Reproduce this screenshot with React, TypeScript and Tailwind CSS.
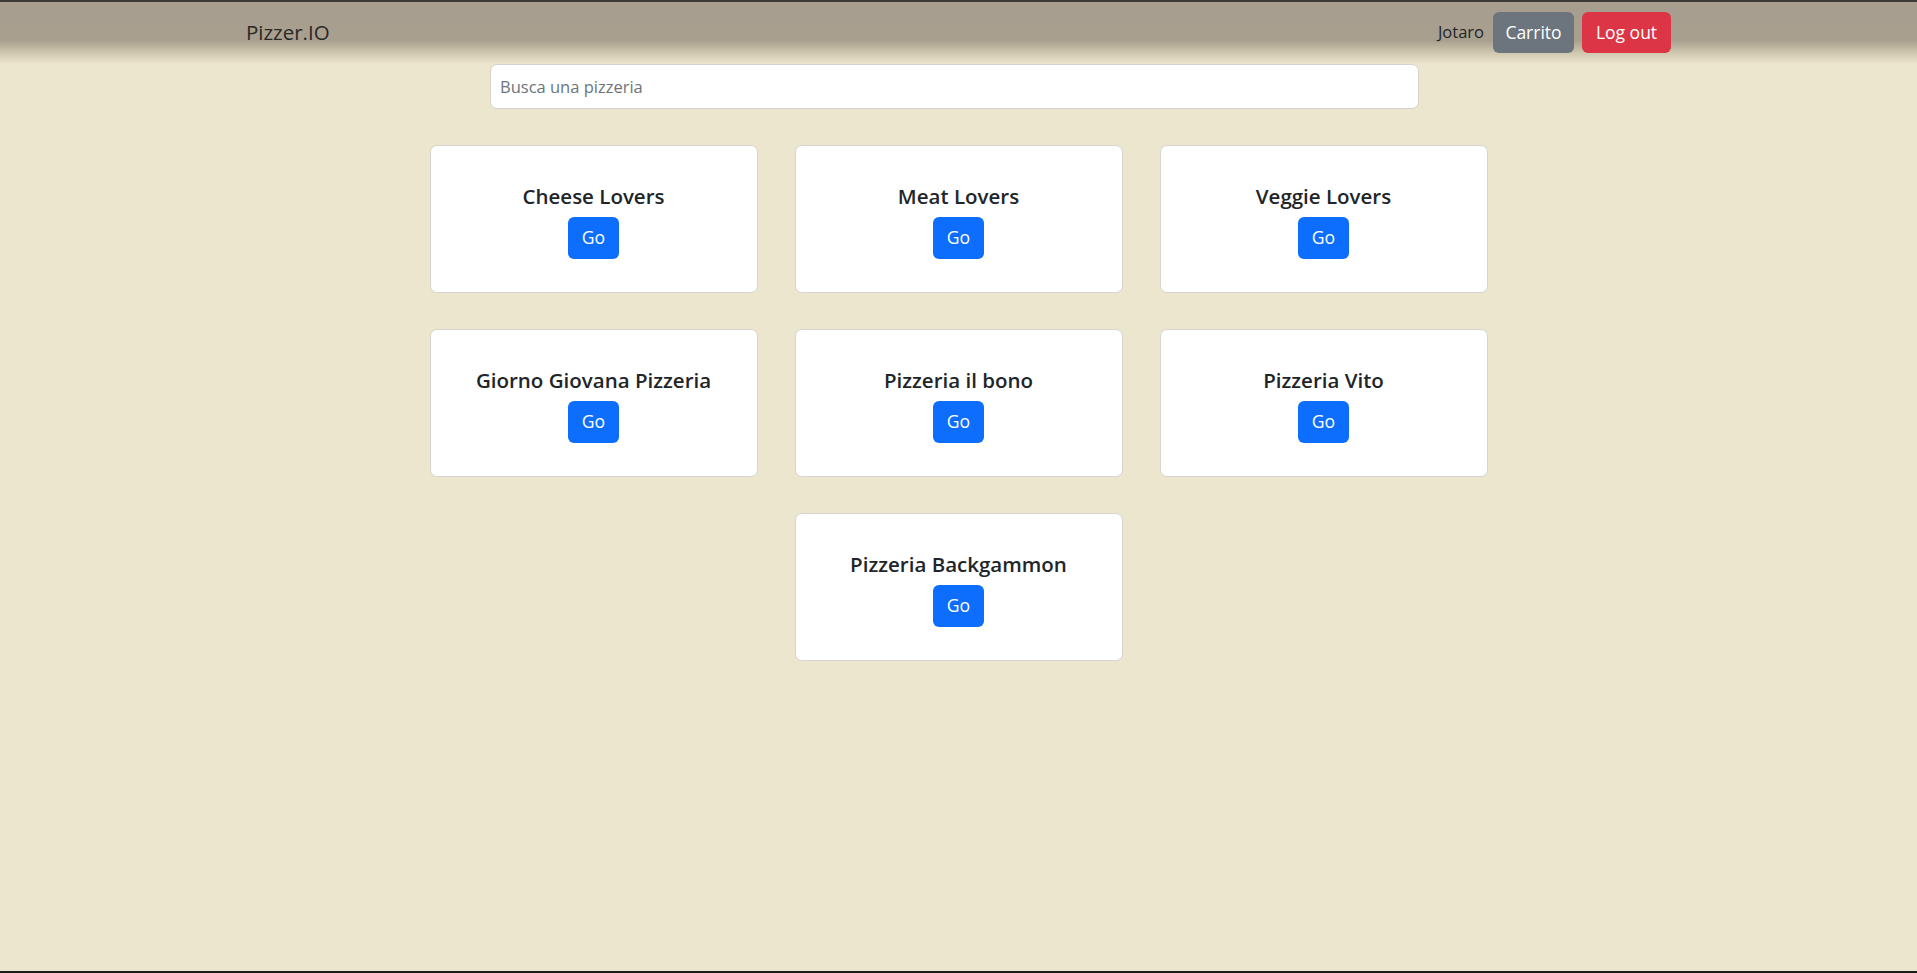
import React from "react";

const pizzerias = [
  "Cheese Lovers",
  "Meat Lovers",
  "Veggie Lovers",
  "Giorno Giovana Pizzeria",
  "Pizzeria il bono",
  "Pizzeria Vito",
  "Pizzeria Backgammon",
];

function PizzeriaCard({ name }: { name: string }) {
  return (
    <div className="flex h-[148px] w-[328px] flex-col items-center justify-center rounded-[7px] border border-[#d6d4cf] bg-white pt-[3px]">
      <h5 className="mb-[8px] text-[20.5px] font-semibold leading-[26px] text-[#212529]">
        {name}
      </h5>
      <button className="h-[42px] rounded-[6px] bg-[#0d6efd] px-[14px] text-[17.6px] text-white">
        Go
      </button>
    </div>
  );
}

export default function App() {
  return (
    <div
      className="flex min-h-screen flex-col bg-[#ede6cf]"
      style={{ fontFamily: '"Open Sans", "Noto Sans", sans-serif' }}
    >
      <nav className="h-[64px] border-t-2 border-[#3b3a35] bg-[linear-gradient(180deg,#a79e8f_0%,#a89f8f_62%,#cfc7ae_82%,#ede6cf_100%)]">
        <div className="mx-auto flex h-[62px] w-[1425px] items-center justify-between pb-[2px]">
          <a className="text-[20.5px] text-[#2b2924]">Pizzer.IO</a>
          <div className="flex items-center">
            <span className="mr-[9px] text-[16.5px] text-[#212529]">Jotaro</span>
            <button className="mr-[8px] h-[41px] w-[81px] rounded-[6px] bg-[#6c757d] text-[17.5px] text-white">
              Carrito
            </button>
            <button className="h-[41px] w-[89px] rounded-[6px] bg-[#dc3545] text-[17.5px] text-white">
              Log out
            </button>
          </div>
        </div>
      </nav>

      <div className="flex justify-center pr-[8px]">
        <input
          placeholder="Busca una pizzeria"
          className="h-[45px] w-[929px] rounded-[7px] border border-[#d4d2cc] bg-white px-[9px] text-[16.5px] text-[#212529] placeholder:text-[#6c757d] focus:outline-none"
        />
      </div>

      <div className="mx-auto mt-[36px] grid w-[1058px] grid-cols-3 gap-x-[37px] gap-y-[36px]">
        {pizzerias.map((p, i) => (
          <div key={p} className={i === 6 ? "col-start-2" : ""}>
            <PizzeriaCard name={p} />
          </div>
        ))}
      </div>

      <div className="flex-1" />
      <div className="h-[2px] bg-[#1c1c1a]" />
    </div>
  );
}
